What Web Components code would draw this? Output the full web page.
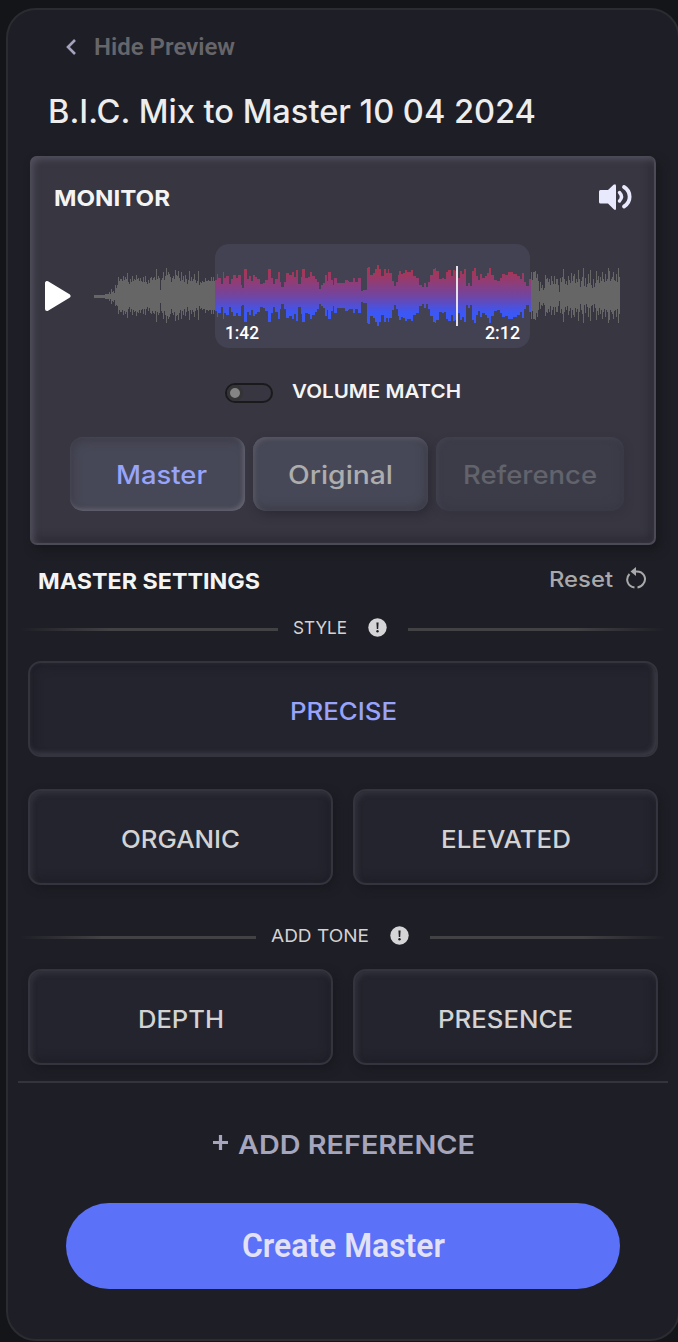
<!DOCTYPE html>
<html lang="en">
<head>
<meta charset="utf-8">
<title>Mix to Master</title>
<style>
  html, body {
    margin: 0;
    height: 1342px;
    overflow: hidden;
    background: #131519;
  }
  body {
    font-family: Inter, "Liberation Sans", sans-serif;
    color: #f4f4f4;
  }
</style>
</head>
<body>
<master-panel></master-panel>

<script>
// One line of text stretched to a set width
class FitText extends HTMLElement {
  connectedCallback() {
    const w = parseFloat(this.getAttribute("w"));
    this.attachShadow({ mode: "open" }).innerHTML = `
      <style>
        :host { display: block; flex: none; width: ${w}px; white-space: nowrap; line-height: 1.2; }
        span { display: inline-block; transform-origin: 0 50%; }
      </style>
      <span><slot></slot></span>`;
    const span = this.shadowRoot.querySelector("span");
    const natural = span.getBoundingClientRect().width;
    if (natural) span.style.transform = `scaleX(${w / natural})`;
  }
}

// [x, half height] pairs, x runs from 0 to 526
const PEAKS = [
  [0,1],[2,1],[4,1],[7,1],[11,2],[14,2],[15,4],[16,2],[17,7],[18,4],[19,5],[20,3],[21,11],[22,8],[23,11],
  [24,19],[25,15],[26,17],[28,15],[29,20],[30,16],[31,19],[32,17],[33,23],[34,14],[35,12],[36,17],[37,14],
  [38,20],[39,15],[40,17],[41,16],[42,21],[43,17],[44,18],[45,15],[46,18],[47,15],[48,14],[49,19],[50,14],
  [51,20],[52,14],[53,12],[54,16],[55,13],[56,18],[57,19],[58,16],[59,18],[60,19],[61,16],[62,27],[63,17],
  [64,20],[65,18],[66,6],[67,16],[68,18],[69,24],[70,16],[71,20],[72,28],[73,21],[74,24],[75,22],[76,19],
  [77,14],[78,18],[79,20],[80,17],[81,26],[82,21],[83,20],[84,25],[85,18],[86,15],[87,24],[88,16],[89,20],
  [90,14],[91,21],[92,17],[93,12],[94,16],[95,25],[96,15],[97,19],[98,15],[99,17],[100,22],[101,16],[102,13],
  [103,15],[104,25],[105,11],[106,14],[107,13],[108,15],[109,14],[111,18],[112,15],[114,16],[115,15],[117,19],
  [118,15],[119,19],[120,15],
  [121,16],[123,22],[124,18],[127,12],[129,24],[130,18],[132,20],[135,12],[137,17],[139,21],[142,18],[144,21],
  [147,11],[148,8],[150,27],[153,17],[155,20],[157,15],[159,21],[161,19],[163,17],[166,12],[169,13],[171,16],
  [174,27],[177,18],[179,12],[181,17],[184,24],[186,14],[187,9],[190,14],[192,23],[195,21],[198,24],[200,19],
  [202,26],[204,12],[207,19],[208,27],[211,18],[214,19],[216,24],[218,20],[221,17],[223,14],[225,7],[227,11],
  [229,13],[231,21],[233,15],[234,24],[237,16],[239,11],[240,18],[243,13],[247,13],[249,13],[251,16],[254,15],
  [255,14],[259,18],[261,14],[264,18],[267,5],[269,6],[273,28],[274,29],[276,21],[279,23],[281,27],[283,31],
  [285,27],[287,20],[290,27],[292,23],[294,27],[295,23],[298,15],[300,10],[302,14],[304,21],[305,25],[307,22],
  [309,23],[311,26],[313,24],[317,26],[319,20],[322,18],[325,11],[328,9],[330,13],[332,9],[334,14],[336,21],
  [339,27],[341,28],[342,25],[345,17],[348,18],[350,17],[352,24],[354,26],[357,20],[359,26],[361,25],[364,18],
  [366,25],[368,22],[370,27],[372,10],[374,13],[376,10],[378,25],[380,28],[382,20],[384,16],[386,22],[388,18],
  [391,20],[393,23],[395,28],[397,21],[400,16],[403,15],[406,18],[408,22],[411,21],[414,24],[419,22],[423,20],
  [426,17],[428,23],[430,14],[432,10],[435,17],
  [437,24],[438,16],[439,24],[441,25],[442,18],[443,22],[444,15],[445,5],[446,14],[447,8],[448,11],
  [449,6],[450,8],[451,21],[452,17],[453,18],[454,14],[455,17],[456,11],[457,20],[458,15],[459,12],[460,20],
  [461,12],[462,17],[464,11],[465,4],[466,18],[467,14],[468,19],[469,27],[470,17],[471,12],[472,15],[473,11],
  [474,20],[475,16],[476,13],[477,23],[478,15],[479,20],[480,22],[481,13],[482,17],[483,14],[484,26],[485,17],
  [486,9],[487,15],[488,19],[489,28],[490,10],[491,18],[492,9],[493,12],[494,22],[495,13],[496,26],[497,11],
  [498,8],[499,17],[500,9],[501,13],[502,25],[503,16],[504,20],[505,13],[506,19],[507,15],[508,24],[509,17],
  [510,14],[511,22],[512,15],[513,17],[514,28],[515,25],[516,15],[517,17],[518,19],[519,24],[520,16],[521,15],
  [522,22],[523,14],[524,28],[525,19],[526,0],
];

class WaveForm extends HTMLElement {
  connectedCallback() {
    this.attachShadow({ mode: "open" }).innerHTML = `
      <style>
        :host { display: block; position: relative; width: 527px; height: 104px; }
        svg { position: absolute; inset: 0; }
        .window {
          position: absolute;
          left: 121px;
          width: 315px;
          height: 104px;
          border-radius: 14px;
          background: #434253;
        }
        .times {
          position: absolute;
          left: 131px;
          width: 295px;
          top: 78px;
          display: flex;
          justify-content: space-between;
          font: 500 18px Roboto, sans-serif;
          color: #fff;
        }
      </style>
      <div class="window"></div>
      <svg width="527" height="104" shape-rendering="crispEdges">
        <defs>
          <linearGradient id="heat" gradientUnits="userSpaceOnUse" x1="0" y1="22" x2="0" y2="82">
            <stop offset=".08" stop-color="#a83654"/>
            <stop offset=".5" stop-color="#7145a1"/>
            <stop offset=".78" stop-color="#3b57f6"/>
          </linearGradient>
        </defs>
        <path fill="#666" d="${this.bars(0, 121)}${this.bars(437, 527)}"/>
        <path fill="url(#heat)" d="${this.bars(121, 437)}"/>
        <rect x="362" y="22" width="2" height="60" fill="#e4e1ea"/>
      </svg>
      <div class="times"><slot></slot></div>`;
  }

  bars(from, to) {
    let d = "";
    for (let i = 0; i < PEAKS.length - 1; i++) {
      const [x, h] = PEAKS[i];
      if (x < from || x >= to) continue;
      d += `M${x} ${52 - h}H${PEAKS[i + 1][0]}V${53 + h - (h > 8 ? 2 : 0)}H${x}z`;
    }
    return d;
  }
}

class ToggleSwitch extends HTMLElement {
  connectedCallback() {
    this.attachShadow({ mode: "open" }).innerHTML = `
      <style>
        :host {
          display: flex;
          align-items: center;
          box-sizing: border-box;
          width: 48px;
          height: 20px;
          border: 2px solid #1a1a1d;
          border-radius: 10px;
        }
        i {
          box-sizing: border-box;
          width: 16px;
          height: 16px;
          border: 3px solid #343436;
          border-radius: 50%;
          background: #858585;
        }
      </style>
      <i></i>`;
  }
}

class SourceTab extends HTMLElement {
  connectedCallback() {
    this.attachShadow({ mode: "open" }).innerHTML = `
      <style>
        :host {
          display: flex;
          align-items: center;
          justify-content: center;
          box-sizing: border-box;
          height: 74px;
          padding-top: 2px;
          border-radius: 13px;
          font-size: 25.5px;
          font-weight: 500;
          color: #adadad;
          background: #474857;
          box-shadow: inset 2px 2px 5px #5a5966, inset -3px -4px 8px #3c3c48, 3px 4px 8px #2d2c36;
        }
        :host([active]) {
          padding-left: 8px;
          color: #98a4fb;
          box-shadow: inset -2px -2px 4px #656471, inset 3px 4px 8px #3d3d49;
        }
        :host([disabled]) {
          color: #62636b;
          background: #3c3c49;
          box-shadow: inset 2px 2px 5px #42414e, inset -3px -4px 8px #393844, 2px 3px 6px #34333e;
        }
      </style>
      <slot></slot>`;
  }
}

class MonitorBox extends HTMLElement {
  connectedCallback() {
    this.attachShadow({ mode: "open" }).innerHTML = `
      <style>
        :host {
          display: block;
          box-sizing: border-box;
          height: 389px;
          border: solid #4b4a55;
          border-width: 0 2px 2px 0;
          border-radius: 7px;
          background: #373641;
          box-shadow: inset 3px 3px 7px #53525e, inset -4px -5px 9px #2c2b35, 4px 5px 10px #17171e;
        }
        header {
          display: flex;
          justify-content: space-between;
          align-items: center;
          height: 82px;
          padding: 0 22px 0 24px;
        }
        header fit-text { font-size: 22px; font-weight: 700; margin-top: 2px; }
        .track {
          display: flex;
          align-items: center;
          margin-top: 6px;
          padding-left: 15px;
          gap: 23px;
        }
        .match {
          display: flex;
          align-items: center;
          gap: 19px;
          height: 89px;
          padding-left: 195px;
        }
        .match fit-text { font-size: 19px; font-weight: 600; margin-top: -1px; }
        nav {
          display: grid;
          grid-template-columns: 175px 175px 188px;
          gap: 8px;
          padding-left: 40px;
        }
      </style>
      <header>
        <fit-text w="116">MONITOR</fit-text>
        <svg width="34" height="28" viewBox="0 0 34 28" fill="none" stroke="#e9e9fd" stroke-linecap="round">
          <path d="M2.5 7H10L15.5 1.8Q18 0 18 3V25.500Q18 28 15.500 26L10 20.500H2.500Q1 20.500 1 19V8.500Q1 7 2.500 7Z" fill="#e9e9fd" stroke="none"/>
          <path d="M21.500 9.500Q25.500 13.800 21.500 18" stroke-width="3.400"/>
          <path d="M26 4C33.500 8.500 33.500 19 26 23.500" stroke-width="3.800"/>
        </svg>
      </header>
      <div class="track">
        <svg width="26" height="32" viewBox="0 0 26 32"><path d="M2 3V29L23.500 16Z" fill="#fff" stroke="#fff" stroke-width="4" stroke-linejoin="round"/></svg>
        <wave-form><fit-text w="34">1:42</fit-text><fit-text w="35">2:12</fit-text></wave-form>
      </div>
      <div class="match">
        <toggle-switch></toggle-switch>
        <fit-text w="169">VOLUME MATCH</fit-text>
      </div>
      <nav>
        <source-tab active><fit-text w="91">Master</fit-text></source-tab>
        <source-tab><fit-text w="105">Original</fit-text></source-tab>
        <source-tab disabled><fit-text w="134">Reference</fit-text></source-tab>
      </nav>`;
  }
}

class SectionRule extends HTMLElement {
  connectedCallback() {
    this.attachShadow({ mode: "open" }).innerHTML = `
      <style>
        :host {
          display: flex;
          align-items: center;
          height: 22px;
          font-size: 17.5px;
          color: #d3d3d3;
        }
        i { flex: 1; height: 3px; margin-top: 2px; background: linear-gradient(90deg, transparent, #424245 35%); }
        i:last-of-type { background: linear-gradient(270deg, transparent, #424245 35%); }
        ::slotted(fit-text) { margin: -2px 21px 0 15px; }
        svg { margin: -2px 21px 0 0; }
      </style>
      <i></i>
      <slot></slot>
      <svg width="19" height="19" viewBox="0 0 19 19">
        <circle cx="9.500" cy="9.500" r="9.200" fill="#d5d5d7"/>
        <path d="M8.400 4.500H10.600L10.200 11H8.800Z" fill="#1e1e26"/>
        <circle cx="9.500" cy="13.300" r="1.200" fill="#1e1e26"/>
      </svg>
      <i></i>`;
  }
}

class StyleButton extends HTMLElement {
  connectedCallback() {
    this.attachShadow({ mode: "open" }).innerHTML = `
      <style>
        :host {
          display: flex;
          align-items: center;
          justify-content: center;
          box-sizing: border-box;
          height: 96px;
          padding-top: 6px;
          border: 2px solid #34343e;
          border-radius: 13px;
          font-size: 24px;
          font-weight: 500;
          color: #d3d3d4;
          background: #24242e;
          box-shadow: inset 2px 3px 5px #32323c, inset -3px -4px 8px #1f1f28, 3px 4px 9px #191920;
        }
        :host([active]) {
          grid-column: span 2;
          color: #98a4fb;
          box-shadow: inset -2px -2px 5px #3d3d47, inset 4px 4px 9px #1f1f28;
        }
      </style>
      <slot></slot>`;
  }
}

class PillButton extends HTMLElement {
  connectedCallback() {
    this.attachShadow({ mode: "open" }).innerHTML = `
      <style>
        :host {
          display: flex;
          align-items: center;
          justify-content: center;
          height: 86px;
          border-radius: 43px;
          font: 600 33px Roboto, sans-serif;
          color: #e2e1f6;
          background: #5a71f8;
        }
      </style>
      <slot></slot>`;
  }
}

class MasterPanel extends HTMLElement {
  connectedCallback() {
    this.attachShadow({ mode: "open" }).innerHTML = `
      <style>
        :host {
          display: block;
          box-sizing: border-box;
          width: 674px;
          height: 1333px;
          margin: 8px 0 0 6px;
          border: 2px solid #2b2c32;
          border-radius: 30px;
          background: #1e1e26;
        }
        .back {
          display: flex;
          align-items: center;
          gap: 17px;
          height: 74px;
          padding-left: 57px;
          font: 600 24px Roboto, sans-serif;
          color: #66666a;
        }
        .title {
          display: flex;
          align-items: center;
          height: 56px;
          margin-bottom: 16px;
          padding-left: 40px;
          font-size: 32px;
          font-weight: 500;
          color: #ededed;
        }
        monitor-box { width: 626px; margin-left: 22px; }
        .settings {
          display: flex;
          justify-content: space-between;
          align-items: center;
          height: 72px;
          padding: 0 31px 0 30px;
          font-size: 22px;
          font-weight: 700;
        }
        .reset {
          display: flex;
          align-items: center;
          gap: 12px;
          margin-top: -3px;
          font-size: 21.5px;
          font-weight: 500;
          color: #a9a9ab;
        }
        section-rule { width: 646px; margin-left: 12px; }
        .grid {
          display: grid;
          grid-template-columns: 305px 305px;
          gap: 32px 20px;
          padding: 22px 0 0 20px;
        }
        .grid + section-rule { margin-top: 40px; }
        hr { width: 650px; height: 2px; margin: 16px 0 0 10px; border: 0; background: #34343d; }
        .add {
          display: flex;
          align-items: center;
          gap: 9px;
          height: 116px;
          padding: 4px 0 0 204px;
          font-size: 26px;
          font-weight: 600;
          color: #a5a6bd;
        }
        .add svg { margin-top: -6px; }
        pill-button { width: 554px; margin-left: 58px; }
      </style>
      <div class="back">
        <svg width="12" height="18" viewBox="0 0 12 18"><path d="M10 2L3 9L10 16" fill="none" stroke="#a3a3bd" stroke-width="2.600"/></svg>
        <fit-text w="141">Hide Preview</fit-text>
      </div>
      <div class="title"><fit-text w="488">B.I.C. Mix to Master 10 04 2024</fit-text></div>
      <monitor-box></monitor-box>
      <div class="settings">
        <fit-text w="222">MASTER SETTINGS</fit-text>
        <div class="reset">
          <fit-text w="64">Reset</fit-text>
          <svg width="22" height="24" viewBox="0 0 22 24" fill="none" stroke="#a9a9ab" stroke-width="2">
            <path d="M10 4.500C19 3.500 22 11.500 18.500 16.500Q16.500 19.800 12.500 20.500M9.500 20.500C2.500 19.500 0 12 4.500 7"/>
            <path d="M11 0L5.500 4.500L11 9Z" fill="#a9a9ab" stroke="none"/>
          </svg>
        </div>
      </div>
      <section-rule><fit-text w="54">STYLE</fit-text></section-rule>
      <div class="grid">
        <style-button active><fit-text w="107">PRECISE</fit-text></style-button>
        <style-button><fit-text w="119">ORGANIC</fit-text></style-button>
        <style-button><fit-text w="130">ELEVATED</fit-text></style-button>
      </div>
      <section-rule><fit-text w="98">ADD TONE</fit-text></section-rule>
      <div class="grid">
        <style-button><fit-text w="86">DEPTH</fit-text></style-button>
        <style-button><fit-text w="135">PRESENCE</fit-text></style-button>
      </div>
      <hr>
      <div class="add">
        <svg width="17" height="17" viewBox="0 0 17 17"><path d="M8.500 1V16M1 8.500H16" stroke="#a5a6bd" stroke-width="3.200"/></svg>
        <fit-text w="237">ADD REFERENCE</fit-text>
      </div>
      <pill-button><fit-text w="203">Create Master</fit-text></pill-button>`;
  }
}

customElements.define("fit-text", FitText);
customElements.define("wave-form", WaveForm);
customElements.define("toggle-switch", ToggleSwitch);
customElements.define("source-tab", SourceTab);
customElements.define("monitor-box", MonitorBox);
customElements.define("section-rule", SectionRule);
customElements.define("style-button", StyleButton);
customElements.define("pill-button", PillButton);
customElements.define("master-panel", MasterPanel);
</script>
</body>
</html>
